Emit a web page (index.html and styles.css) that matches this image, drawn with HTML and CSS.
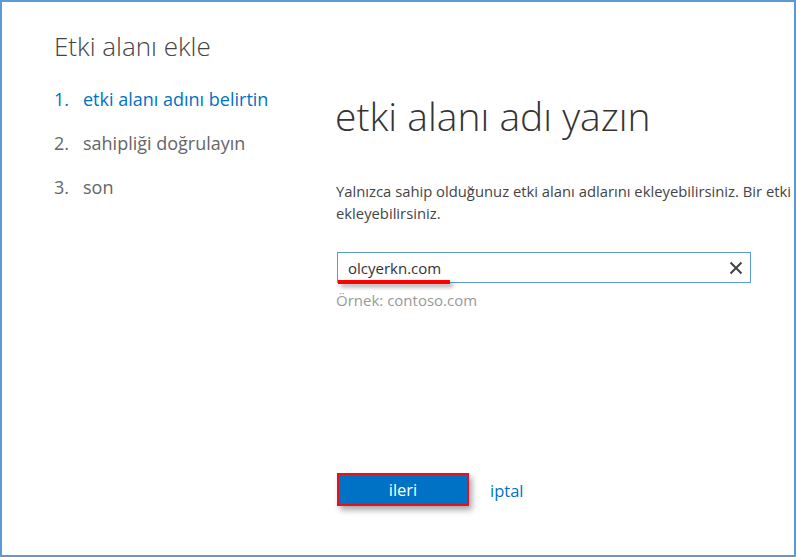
FILE: index.html
```html
<!DOCTYPE html>
<html lang="tr">
<head>
<meta charset="utf-8">
<link rel="stylesheet" href="styles.css">
</head>
<body>
<div class="frame">
  <aside class="side">
    <h1 class="title">Etki alanı ekle</h1>
    <ol class="steps">
      <li class="step active"><span class="num">1.</span><span>etki alanı adını belirtin</span></li>
      <li class="step"><span class="num">2.</span><span>sahipliği doğrulayın</span></li>
      <li class="step"><span class="num">3.</span><span>son</span></li>
    </ol>
  </aside>
  <main class="main">
    <h2 class="heading">etki alanı adı yazın</h2>
    <p class="desc">Yalnızca sahip olduğunuz etki alanı adlarını ekleyebilirsiniz. Bir etki alanını yalnızca bir kez<br>ekleyebilirsiniz.</p>
    <div class="field">
      <span class="value">olcyerkn.com</span>
      <svg class="clear" width="14" height="14" viewBox="0 0 14 14"><path d="M1.5 1.5 L12.5 12.5 M12.5 1.5 L1.5 12.5" stroke="#444" stroke-width="2" fill="none"/></svg>
      <span class="mark"></span>
    </div>
    <div class="hint">Örnek: contoso.com</div>
    <div class="actions">
      <button class="next">ileri</button>
      <a class="cancel">iptal</a>
    </div>
  </main>
</div>
</body>
</html>
```
FILE: styles.css
```css
html, body {
  margin: 0;
  padding: 0;
  background: #fff;
}
.frame {
  box-sizing: border-box;
  width: 796px;
  height: 557px;
  border: 2px solid #5b9bd5;
  overflow: hidden;
  display: flex;
  font-family: "Open Sans", "Noto Sans", sans-serif;
}
.side {
  width: 280px;
  padding-left: 52px;
  padding-top: 28px;
  flex: none;
}
.title {
  margin: 0;
  font-size: 26px;
  line-height: 32px;
  font-weight: 300;
  color: #444;
}
.steps {
  list-style: none;
  margin: 15px 0 0;
  padding: 0;
}
.step {
  display: flex;
  font-size: 18px;
  line-height: 44px;
  color: #666;
  white-space: nowrap;
}
.step.active {
  color: #0072c6;
}
.num {
  width: 29px;
  flex: none;
}
.main {
  flex: 1;
  min-width: 0;
  padding-left: 2px;
  padding-top: 88px;
  display: flex;
  flex-direction: column;
  align-items: flex-start;
}
.heading {
  margin: 0 0 0 -1px;
  font-size: 39px;
  line-height: 52px;
  font-weight: 300;
  color: #333;
  white-space: nowrap;
}
.desc {
  margin: 38px 0 0;
  font-size: 14.8px;
  line-height: 22px;
  color: #444;
  white-space: nowrap;
}
.field {
  position: relative;
  box-sizing: border-box;
  margin: 28px 0 0 1px;
  width: 414px;
  height: 31px;
  border: 1px solid #5b9bd5;
  display: flex;
  align-items: center;
  justify-content: space-between;
  padding: 0 7px 0 10px;
}
.value {
  font-size: 15px;
  color: #333;
}
.clear {
  display: block;
}
.mark {
  position: absolute;
  left: 0;
  top: 27px;
  width: 112px;
  height: 4px;
  background: #ff0000;
  box-shadow: 3px 3px 4px rgba(0, 0, 0, 0.35);
}
.hint {
  margin-top: 8px;
  font-size: 15px;
  line-height: 18px;
  color: #999;
}
.actions {
  margin-top: 164px;
  margin-left: 1px;
  display: flex;
  align-items: center;
  gap: 21px;
}
.next {
  box-sizing: border-box;
  width: 132px;
  height: 33px;
  background: #0072c6;
  border: 2px solid #e8101a;
  color: #fff;
  font-family: "Open Sans", "Noto Sans", sans-serif;
  font-size: 16.5px;
  padding: 0;
  box-shadow: 3px 4px 6px rgba(0, 0, 0, 0.35);
}
.cancel {
  font-size: 16.5px;
  color: #0072c6;
  margin-top: 2px;
}
```
